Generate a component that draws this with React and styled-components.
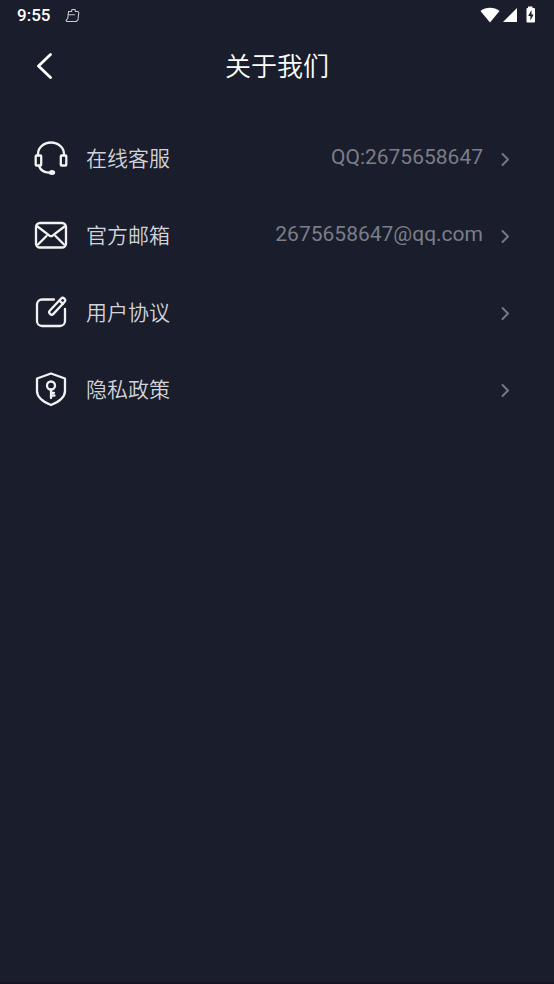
import React from 'react';
import styled, { createGlobalStyle } from 'styled-components';

const GlobalStyle = createGlobalStyle`
  * {
    box-sizing: border-box;
  }
  body {
    margin: 0;
    background: #1a1d2b;
    font-family: Roboto, 'Noto Sans CJK SC', sans-serif;
  }
`;

const Page = styled.div`
  display: flex;
  flex-direction: column;
  min-height: 100vh;
  background: #1a1d2b;
  border-bottom: 2px solid #15131f;
  color: #fff;
`;

const StatusBar = styled.div`
  display: flex;
  align-items: center;
  justify-content: space-between;
  height: 30px;
  padding: 0 17px;
`;

const StatusGroup = styled.div`
  display: flex;
  align-items: center;
  gap: ${(props) => props.$gap}px;
`;

const Clock = styled.span`
  font-size: 17px;
  line-height: 20px;
  font-weight: 500;
`;

const Header = styled.header`
  display: grid;
  grid-template-columns: 60px 1fr 60px;
  align-items: center;
  height: 72px;
  margin-bottom: 17px;
`;

const BackButton = styled.button`
  display: flex;
  justify-content: flex-end;
  padding: 0 8px 0 0;
  border: none;
  background: none;
  color: #fff;
  cursor: pointer;
`;

const Title = styled.h1`
  margin: 0;
  padding-top: 2px;
  font-size: 26px;
  line-height: 36px;
  font-weight: 350;
  text-align: center;
`;

const List = styled.nav`
  display: flex;
  flex-direction: column;
`;

const Row = styled.a`
  display: flex;
  align-items: center;
  height: 77px;
  padding: 0 44px 0 33px;
  color: #d3d3da;
  text-decoration: none;
`;

const RowLabel = styled.span`
  flex: 1;
  margin-left: 17px;
  padding-top: 2px;
  font-size: 21px;
  line-height: 30px;
  font-weight: 350;
`;

const RowValue = styled.span`
  margin-right: 18px;
  padding-bottom: 2px;
  font-size: 21px;
  line-height: 28px;
  color: #7b7d89;
`;

const Icon = styled.svg`
  display: block;
  flex: none;
  fill: none;
  stroke: currentColor;
  stroke-linecap: round;
  stroke-linejoin: round;
`;

const RowIcon = styled(Icon).attrs({ width: 36, height: 36, viewBox: '0 0 36 36' })`
  color: #f2f2f4;
  stroke-width: 2.3;
`;

const HeadsetIcon = () => (
  <RowIcon>
    <path d="M5 15v-1a13 11.5 0 0 1 26 0v1" />
    <rect x="2.7" y="15.5" width="5.5" height="10" rx="0.8" />
    <rect x="27.8" y="15.5" width="5.5" height="10" rx="0.8" />
    <path d="M6 26c1.5 4 5 6.5 10 6.7" />
    <ellipse cx="19" cy="32.5" rx="3.2" ry="2.5" fill="currentColor" stroke="none" />
  </RowIcon>
);

const MailIcon = () => (
  <RowIcon>
    <rect x="3" y="6" width="30" height="24.5" rx="4" />
    <path d="M4.5 9.5l12 9.2q1.5 1 3 0l12-9.200M5 27.500l8.500-8.500M31 27.500l-8.500-8.500" />
  </RowIcon>
);

const EditIcon = () => (
  <RowIcon>
    <path d="M21 5.5H9a5 5 0 0 0-5 5V27a5 5 0 0 0 5 5h18a5 5 0 0 0 5-5V15" />
    <rect x="13.7" y="9.900" width="21" height="4.800" rx="2.400" transform="rotate(-47 24.200 12.300)" />
    <path d="M26.500 6.700l3.400 3.200" />
  </RowIcon>
);

const ShieldIcon = () => (
  <RowIcon>
    <path d="M18 2.500L32 7.500V20c0 6.500-6.500 11-14 14C10.500 31 4 26.500 4 20V7.500z" />
    <circle cx="18" cy="14.500" r="4" />
    <path d="M18 18.500v8.500M18 24.500h3.500M18 21.800h3" />
  </RowIcon>
);

const items = [
  { id: 'service', label: '在线客服', value: 'QQ:2675658647', icon: HeadsetIcon },
  { id: 'email', label: '官方邮箱', value: '2675658647@qq.com', icon: MailIcon },
  { id: 'agreement', label: '用户协议', icon: EditIcon },
  { id: 'privacy', label: '隐私政策', icon: ShieldIcon },
];

const App = () => {
  return (
    <Page>
      <GlobalStyle />
      <StatusBar>
        <StatusGroup $gap={15}>
          <Clock>9:55</Clock>
          <Icon width="15" height="15" viewBox="0 0 15 15" strokeWidth="1.1" color="#c8c9ce">
            <path d="M3.500 3.500h3L7 1.500h3l.5 2h2.500l.8 1-.8 7.300-1.800 1.700H1.600L1 12.500l1.800-2.200z" />
            <path d="M3.500 6.800h6" />
          </Icon>
        </StatusGroup>
        <StatusGroup $gap={3}>
          <svg width="20" height="16" viewBox="0 0 20 16" fill="#fff">
            <path d="M0.500 4C6-0.300 14-0.300 19.500 4L10 15.500z" />
          </svg>
          <svg width="15" height="16" viewBox="0 0 15 16" fill="#fff">
            <path d="M14 1v14H0z" />
          </svg>
          <svg width="16" height="18" viewBox="0 0 16 18" fill="#fff">
            <path d="M7 2V0.500h4.500V2h1.500q1 0 1 1V15.500q0 1-1 1H6.500q-1 0-1-1V3q0-1 1-1z" />
            <path d="M10.500 4L7.200 10h2.200v4.500l3.200-6h-2.100z" fill="#1a1d2b" />
          </svg>
        </StatusGroup>
      </StatusBar>
      <Header>
        <BackButton type="button" aria-label="返回">
          <Icon width="16" height="28" viewBox="0 0 16 28" strokeWidth="2.8">
            <path d="M14.500 2.500L2.500 14l12 11.500" />
          </Icon>
        </BackButton>
        <Title>关于我们</Title>
      </Header>
      <List>
        {items.map(({ id, label, value, icon: ItemIcon }) => (
          <Row key={id} href={`#${id}`}>
            <ItemIcon />
            <RowLabel>{label}</RowLabel>
            {value && <RowValue>{value}</RowValue>}
            <Icon width="9" height="16" viewBox="0 0 9 16" strokeWidth="1.9" color="#777985">
              <path d="M1.500 4L7 9.500 1.500 15" />
            </Icon>
          </Row>
        ))}
      </List>
    </Page>
  );
};

export default App;
